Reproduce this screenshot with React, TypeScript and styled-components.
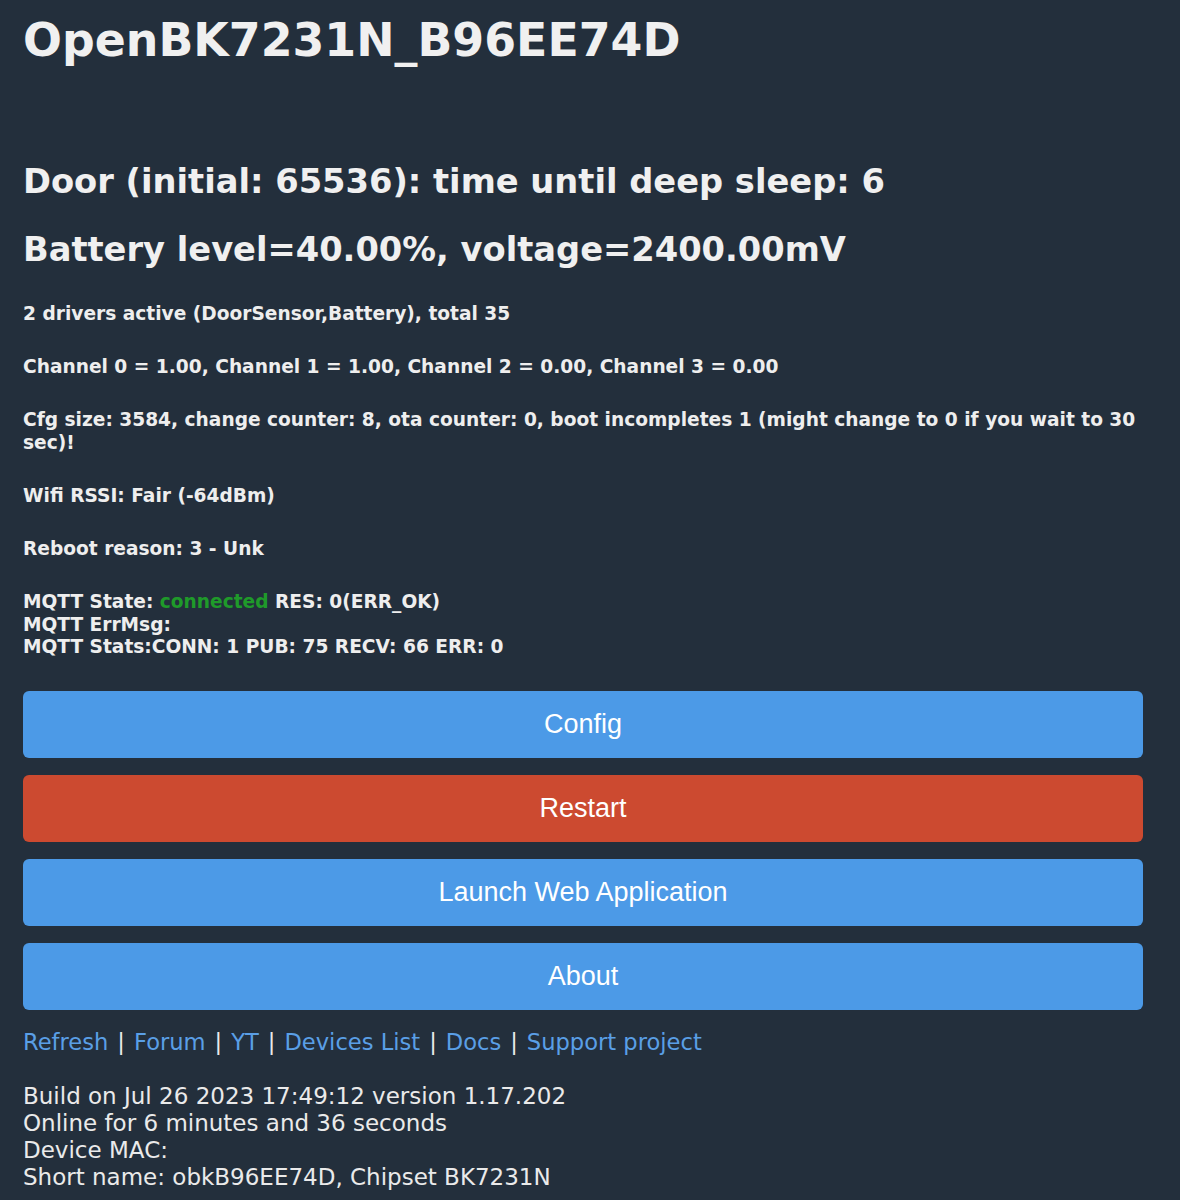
import React from "react";
import styled, { createGlobalStyle } from "styled-components";

const GlobalStyle = createGlobalStyle`
    html, body {
        margin: 0;
        padding: 0;
        background: #232f3c;
    }
    body {
        color: #eaeaea;
        font-family: "DejaVu Sans", Verdana, sans-serif;
    }
`;

const Page = styled.div`
    min-height: 1200px;
    box-sizing: border-box;
    padding: 0 37px 0 23px;
    display: flex;
    flex-direction: column;
`;

const Title = styled.h1`
    margin: 14px 0 0 0;
    font-size: 45.8px;
    line-height: 52px;
    font-weight: bold;
    color: #f0f0f0;
`;

const Heading = styled.h2<{ $top: number }>`
    margin: ${(p) => p.$top}px 0 0 0;
    font-size: 33.7px;
    line-height: 40px;
    font-weight: bold;
    color: #f0f0f0;
`;

const InfoBlock = styled.div<{ $top: number }>`
    margin-top: ${(p) => p.$top}px;
    font-size: 18.6px;
    line-height: 22.5px;
    font-weight: bold;
    color: #eeeeee;
`;

const Connected = styled.span`
    color: #1f9a2a;
`;

const ButtonList = styled.div`
    margin-top: 32px;
    display: flex;
    flex-direction: column;
    gap: 17px;
`;

const ActionButton = styled.button<{ $danger?: boolean }>`
    height: 67px;
    width: 100%;
    border: none;
    border-radius: 6px;
    background: ${(p) => (p.$danger ? "#cc4a30" : "#4c9ae7")};
    color: #ffffff;
    font-family: "Liberation Sans", Arial, sans-serif;
    font-size: 27px;
    cursor: pointer;
`;

const LinkRow = styled.div`
    margin-top: 17px;
    font-size: 22.6px;
    line-height: 30px;
    color: #eaeaea;
`;

const FooterLink = styled.a`
    color: #5a9fe6;
    text-decoration: none;
`;

const Separator = styled.span`
    margin: 0 9px;
`;

const BuildInfo = styled.div`
    margin-top: 26px;
    font-size: 23px;
    line-height: 27px;
    color: #eaeaea;
`;

const links = ["Refresh", "Forum", "YT", "Devices List", "Docs", "Support project"];

export default function App() {
    return (
        <React.Fragment>
            <GlobalStyle />
            <Page>
                <Title>OpenBK7231N_B96EE74D</Title>
                <Heading $top={96}>Door (initial: 65536): time until deep sleep: 6</Heading>
                <Heading $top={28}>Battery level=40.00%, voltage=2400.00mV</Heading>
                <InfoBlock $top={33}>2 drivers active (DoorSensor,Battery), total 35</InfoBlock>
                <InfoBlock $top={30.5}>Channel 0 = 1.00, Channel 1 = 1.00, Channel 2 = 0.00, Channel 3 = 0.00</InfoBlock>
                <InfoBlock $top={30.5}>
                    Cfg size: 3584, change counter: 8, ota counter: 0, boot incompletes 1 (might change to 0 if you wait to 30 sec)!
                </InfoBlock>
                <InfoBlock $top={30.5}>Wifi RSSI: Fair (-64dBm)</InfoBlock>
                <InfoBlock $top={30.5}>Reboot reason: 3 - Unk</InfoBlock>
                <InfoBlock $top={31}>
                    MQTT State: <Connected>connected</Connected> RES: 0(ERR_OK)
                    <br />
                    MQTT ErrMsg:
                    <br />
                    MQTT Stats:CONN: 1 PUB: 75 RECV: 66 ERR: 0
                </InfoBlock>
                <ButtonList>
                    <ActionButton>Config</ActionButton>
                    <ActionButton $danger>Restart</ActionButton>
                    <ActionButton>Launch Web Application</ActionButton>
                    <ActionButton>About</ActionButton>
                </ButtonList>
                <LinkRow>
                    {links.map((name, i) => (
                        <React.Fragment key={name}>
                            {i > 0 && <Separator>|</Separator>}
                            <FooterLink href="#">{name}</FooterLink>
                        </React.Fragment>
                    ))}
                </LinkRow>
                <BuildInfo>
                    Build on Jul 26 2023 17:49:12 version 1.17.202
                    <br />
                    Online for 6 minutes and 36 seconds
                    <br />
                    Device MAC:
                    <br />
                    Short name: obkB96EE74D, Chipset BK7231N
                </BuildInfo>
            </Page>
        </React.Fragment>
    );
}
